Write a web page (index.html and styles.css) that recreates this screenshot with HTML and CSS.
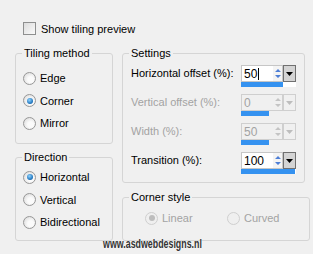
FILE: index.html
```html
<!DOCTYPE html>
<html lang="en">
<head>
    <meta charset="UTF-8">
    <title>Tiling</title>
    <link rel="stylesheet" href="styles.css">
</head>
<body>
    <div class="dialog">
        <div class="check-row"><span class="checkbox"></span>Show tiling preview</div>
        <div class="columns">
            <div class="col">
                <fieldset class="group group-tiling">
                    <legend>Tiling method</legend>
                    <div class="radio-list">
                        <div class="radio-row"><span class="radio"></span>Edge</div>
                        <div class="radio-row"><span class="radio checked"></span>Corner</div>
                        <div class="radio-row"><span class="radio"></span>Mirror</div>
                    </div>
                </fieldset>
                <fieldset class="group group-direction">
                    <legend>Direction</legend>
                    <div class="radio-list">
                        <div class="radio-row"><span class="radio checked"></span>Horizontal</div>
                        <div class="radio-row"><span class="radio"></span>Vertical</div>
                        <div class="radio-row"><span class="radio"></span>Bidirectional</div>
                    </div>
                </fieldset>
            </div>
            <div class="col">
                <fieldset class="group group-settings">
                    <legend>Settings</legend>
                    <div class="field-row">
                        <span class="field-label">Horizontal offset (%):</span>
                        <div class="num-field">
                            <div class="num-top">
                                <span class="num-box">50<span class="caret"></span></span>
                                <span class="spin"><svg width="8" height="13" viewBox="0 0 8 13"><path d="M1 5 L4 2 L7 5 Z M1 8 L4 11 L7 8 Z"/></svg></span>
                                <span class="drop"><svg width="7" height="4" viewBox="0 0 7 4"><path d="M0 0 H7 L3.5 4 Z"/></svg></span>
                            </div>
                            <div class="num-bar"><span style="width: 42px"></span></div>
                        </div>
                    </div>
                    <div class="field-row disabled">
                        <span class="field-label">Vertical offset (%):</span>
                        <div class="num-field">
                            <div class="num-top">
                                <span class="num-box">0</span>
                                <span class="spin"><svg width="8" height="13" viewBox="0 0 8 13"><path d="M1 5 L4 2 L7 5 Z M1 8 L4 11 L7 8 Z"/></svg></span>
                                <span class="drop"><svg width="7" height="4" viewBox="0 0 7 4"><path d="M0 0 H7 L3.5 4 Z"/></svg></span>
                            </div>
                            <div class="num-bar"><span style="width: 28px"></span></div>
                        </div>
                    </div>
                    <div class="field-row disabled">
                        <span class="field-label">Width (%):</span>
                        <div class="num-field">
                            <div class="num-top">
                                <span class="num-box">50</span>
                                <span class="spin"><svg width="8" height="13" viewBox="0 0 8 13"><path d="M1 5 L4 2 L7 5 Z M1 8 L4 11 L7 8 Z"/></svg></span>
                                <span class="drop"><svg width="7" height="4" viewBox="0 0 7 4"><path d="M0 0 H7 L3.5 4 Z"/></svg></span>
                            </div>
                            <div class="num-bar"><span style="width: 28px"></span></div>
                        </div>
                    </div>
                    <div class="field-row">
                        <span class="field-label">Transition (%):</span>
                        <div class="num-field">
                            <div class="num-top">
                                <span class="num-box">100</span>
                                <span class="spin"><svg width="8" height="13" viewBox="0 0 8 13"><path d="M1 5 L4 2 L7 5 Z M1 8 L4 11 L7 8 Z"/></svg></span>
                                <span class="drop"><svg width="7" height="4" viewBox="0 0 7 4"><path d="M0 0 H7 L3.5 4 Z"/></svg></span>
                            </div>
                            <div class="num-bar"><span style="width: 54px"></span></div>
                        </div>
                    </div>
                </fieldset>
                <fieldset class="group group-corner">
                    <legend>Corner style</legend>
                    <div class="corner-row">
                        <div class="radio-row disabled"><span class="radio checked"></span>Linear</div>
                        <div class="radio-row disabled"><span class="radio"></span>Curved</div>
                    </div>
                </fieldset>
            </div>
        </div>
        <div class="watermark">www.asdwebdesigns.nl</div>
    </div>
</body>
</html>
```

FILE: styles.css
```css
body {
    margin: 0;
    background: #f0f0f0;
    font-family: "Liberation Sans", Arial, sans-serif;
    font-size: 11px;
    color: #000;
}
.dialog {
    position: relative;
    width: 313px;
    height: 254px;
    padding: 22px 0 0 15px;
    box-sizing: border-box;
}
.check-row {
    display: flex;
    align-items: center;
    height: 13px;
    padding-left: 8px;
}
.checkbox {
    width: 11px;
    height: 11px;
    border: 1px solid #8e8f8f;
    background: linear-gradient(135deg, #dcdcdc, #fafafa);
    margin-right: 5px;
}
.columns {
    display: flex;
    gap: 9px;
    margin-top: 12px;
}
.col {
    display: flex;
    flex-direction: column;
}
.group {
    margin: 0;
    padding: 0;
    border: 1px solid #d5d5d5;
    border-radius: 3px;
    box-sizing: border-box;
}
.group legend {
    margin-left: 6px;
    padding: 0 2px;
    line-height: 13px;
}
.group-tiling {
    width: 98px;
    height: 97px;
}
.group-direction {
    width: 98px;
    height: 90px;
    margin-top: 7px;
}
.group-settings {
    width: 183px;
    height: 136px;
}
.group-corner {
    width: 183px;
    height: 50px;
    margin-top: 8px;
}
.radio-list {
    padding: 7px 0 0 7px;
}
.group-direction .radio-list {
    padding-top: 2px;
}
.radio-row {
    display: flex;
    align-items: center;
    height: 22.5px;
}
.radio {
    width: 11px;
    height: 11px;
    border: 1px solid #979797;
    border-radius: 50%;
    background: radial-gradient(circle at 60% 60%, #fbfbfb 30%, #d4d4d4 100%);
    margin-right: 4px;
    display: flex;
    align-items: center;
    justify-content: center;
}
.radio.checked::after {
    content: "";
    width: 6px;
    height: 6px;
    border-radius: 50%;
    background: radial-gradient(circle at 40% 35%, #8fd3ff, #1a6fb8 70%, #16508a);
}
.radio-row.disabled {
    color: #a3a3a3;
}
.radio-row.disabled .radio {
    border-color: #cfcfcf;
    background: #efefef;
}
.radio-row.disabled .radio.checked::after {
    background: #bdbdbd;
}
.field-row {
    display: flex;
    height: 29px;
    padding-left: 8px;
}
.group-settings .field-row:first-of-type {
    margin-top: 5px;
}
.field-label {
    width: 110px;
    line-height: 16px;
}
.num-field {
    width: 55px;
}
.num-top {
    display: flex;
    height: 17px;
}
.num-box {
    display: flex;
    align-items: center;
    width: 32px;
    padding-left: 2px;
    box-sizing: border-box;
    background: #fff;
    border: 1px solid #c6c6c6;
    border-right: none;
    font-size: 12px;
}
.caret {
    width: 1px;
    height: 12px;
    background: #000;
    margin-left: 1px;
}
.spin {
    width: 10px;
    display: flex;
    align-items: center;
    justify-content: center;
    background: #f4f4f4;
    border: 1px solid #c6c6c6;
    border-left: none;
    box-sizing: border-box;
}
.spin svg {
    fill: #4f7fd6;
}
.drop {
    width: 13px;
    display: flex;
    align-items: center;
    justify-content: center;
    background: #d4d4d4;
    border: 1px solid #707070;
    box-sizing: border-box;
}
.drop svg {
    fill: #000;
}
.num-bar {
    height: 5px;
    background: #fff;
}
.num-bar span {
    display: block;
    height: 100%;
    background: #3592f0;
}
.field-row.disabled {
    color: #a3a3a3;
}
.field-row.disabled .num-box {
    background: #f0f0f0;
    border-color: #cfcfcf;
}
.field-row.disabled .spin {
    background: #f0f0f0;
    border-color: #cfcfcf;
}
.field-row.disabled .spin svg {
    fill: #c4c4c4;
}
.field-row.disabled .drop {
    background: #f0f0f0;
    border-color: #cfcfcf;
}
.field-row.disabled .drop svg {
    fill: #bdbdbd;
}
.field-row.disabled .num-bar {
    background: #f0f0f0;
}
.corner-row {
    display: flex;
    padding: 0 0 0 22px;
}
.corner-row .radio-row {
    width: 82px;
    height: 28px;
}
/* watermark sits over the bottom borders */
.watermark {
    position: absolute;
    left: 103px;
    top: 236px;
    font-family: "Liberation Sans", Arial, sans-serif;
    font-weight: bold;
    font-size: 13px;
    color: #333;
    text-shadow: 0 0 2px #fff;
    transform: scaleX(0.68);
    transform-origin: left top;
    white-space: nowrap;
}
```
